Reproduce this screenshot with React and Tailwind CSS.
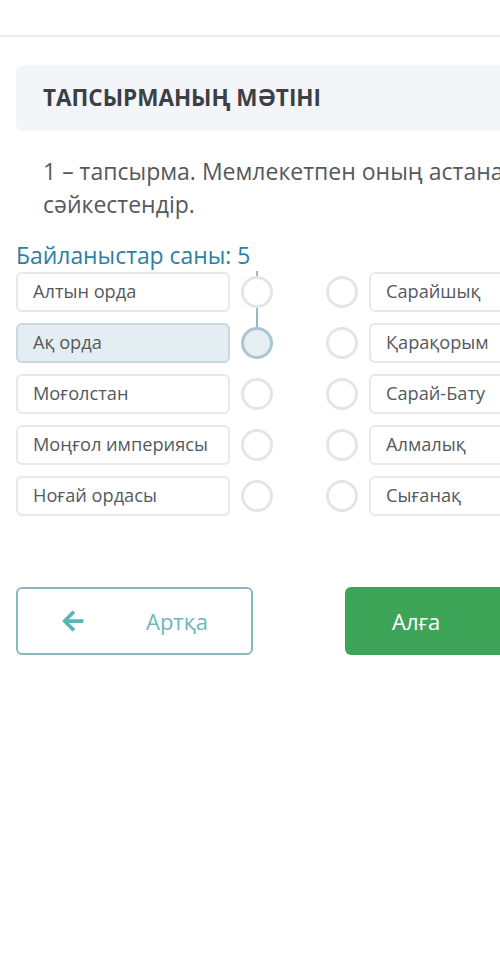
import React from "react";
import { FaArrowLeft } from "react-icons/fa";

const left = ["Алтын орда", "Ақ орда", "Моғолстан", "Моңғол империясы", "Ноғай ордасы"];
const right = ["Сарайшық", "Қарақорым", "Сарай-Бату", "Алмалық", "Сығанақ"];

function Row({ l, r, i }) {
  const active = i === 1;
  return (
    <div className="flex h-[40px] items-center">
      <div
        className={
          active
            ? "flex h-[40px] w-[214px] shrink-0 items-center rounded-md border-2 border-[#c7d8df] bg-[#e4eef2] pl-[15px] text-[18.2px] text-[#55595e]"
            : "flex h-[40px] w-[214px] shrink-0 items-center rounded-md border-2 border-[#e6e8ea] bg-white pl-[15px] text-[18.2px] text-[#55595e]"
        }
      >
        {l}
      </div>
      <div className="relative ml-[11px] h-[32px] w-[32px] shrink-0">
        <div
          className={
            active
              ? "h-[32px] w-[32px] rounded-full border-[3px] border-[#a9c6d2] bg-[#e6eef2]"
              : "h-[32px] w-[32px] rounded-full border-[3px] border-[#e4e5e6] bg-white"
          }
        />
        {i === 0 && (
          <>
            <div className="absolute bottom-full left-1/2 h-[5px] w-[2px] -translate-x-1/2 bg-[#97b9c7]" />
            <div className="absolute top-full left-1/2 h-[19px] w-[2px] -translate-x-1/2 bg-[#97b9c7]" />
          </>
        )}
      </div>
      <div className="ml-[53px] h-[32px] w-[32px] shrink-0 rounded-full border-[3px] border-[#e4e5e6] bg-white" />
      <div className="ml-[11px] flex h-[40px] w-[214px] shrink-0 items-center rounded-md border-2 border-[#e6e8ea] bg-white pl-[15px] text-[18.2px] text-[#55595e]">
        {r}
      </div>
    </div>
  );
}

export default function App() {
  return (
    <div
      className="min-h-[974px] w-[500px] overflow-hidden bg-white"
      style={{ fontFamily: '"Open Sans", "Noto Sans", sans-serif' }}
    >
      <div className="h-[37px] border-b-2 border-[#ececec]" />
      <div className="w-[640px] px-4">
        <div className="mt-[28px] flex h-[66px] items-center rounded-lg bg-[#f4f5f8] pl-[27px]">
          <span className="text-[22.5px] font-bold text-[#3b3f46]">ТАПСЫРМАНЫҢ МӘТІНІ</span>
        </div>
        <p className="mt-[24px] w-[590px] pl-[27px] text-[23px] leading-[33px] text-[#55595e]">
          1 – тапсырма. Мемлекетпен оның астанасын сәйкестендір.
        </p>
        <div className="mt-[22px] text-[22.9px] leading-[26px] text-[#2c7fa2]">Байланыстар саны: 5</div>
        <div className="mt-[3px] flex flex-col gap-[11px]">
          {left.map((l, i) => (
            <Row key={i} l={l} r={right[i]} i={i} />
          ))}
        </div>
        <div className="mt-[71px] flex gap-[92px]">
          <button className="flex h-[68px] w-[237px] items-center rounded-md border-2 border-[#88babd] bg-white pl-[43px]">
            <FaArrowLeft size={24} className="text-[#5bb4b4]" />
            <span className="ml-[61px] text-[22px] text-[#6cb8b8]">Артқа</span>
          </button>
          <button className="flex h-[68px] w-[237px] items-center rounded-md bg-[#3ea558] pl-[47px]">
            <span className="text-[22px] text-white">Алға</span>
          </button>
        </div>
      </div>
    </div>
  );
}
